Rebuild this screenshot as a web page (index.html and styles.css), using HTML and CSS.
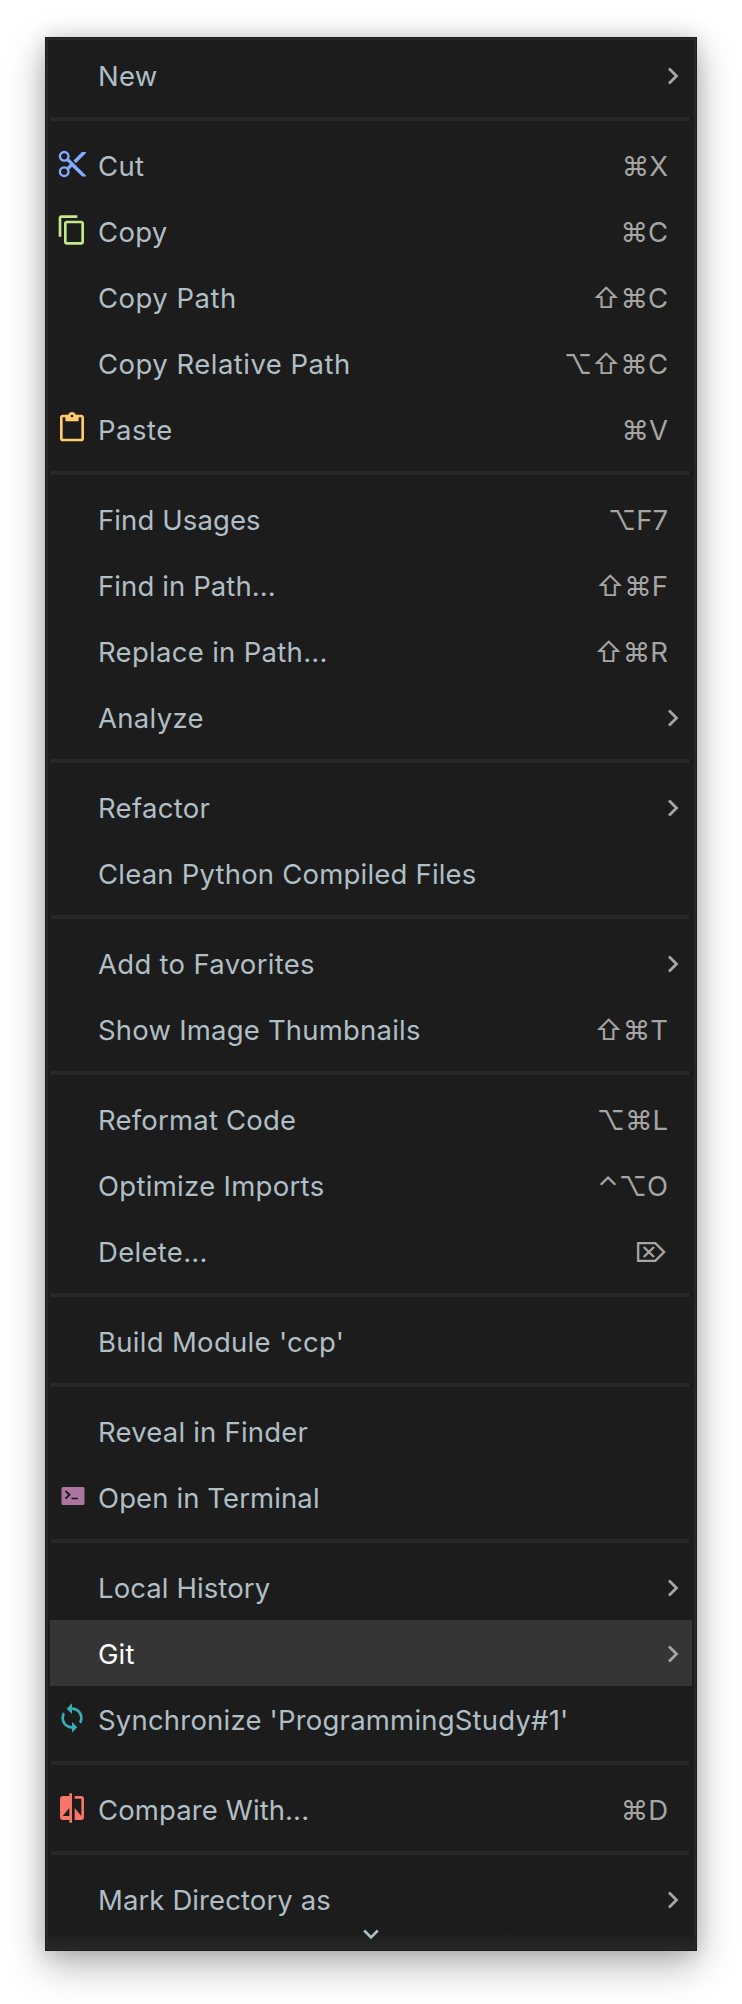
FILE: index.html
```html
<!DOCTYPE html>
<html lang="en">
<head>
<meta charset="utf-8">
<title>Context menu</title>
<link rel="stylesheet" href="styles.css">
</head>
<body>
<svg width="0" height="0" class="defs" aria-hidden="true">
  <symbol id="chevron" viewBox="0 0 12 18"><path d="M2 1.500 9.500 9 2 16.500" fill="none" stroke="currentColor" stroke-width="2.800"/></symbol>
</svg>
<nav class="menu">
  <div class="item"><span class="icon"></span><span class="label">New</span><svg class="arrow"><use href="#chevron"/></svg></div>
  <hr class="separator">
  <div class="item"><span class="icon"><svg class="cut" viewBox="0 0 28 28"><g fill="none" stroke="currentColor" stroke-width="2.400"><circle cx="6.200" cy="6.300" r="4.300"/><circle cx="6.200" cy="21.700" r="4.300"/></g><path d="M8 10.500 10.200 7.800 28 25.500V26.500H24.200L14 16.700 10 20.500 7.800 18.300 12 14ZM15.500 10.500 24 2H28V3L17.800 13.200Z" fill="currentColor"/></svg></span><span class="label">Cut</span><span class="keys">⌘X</span></div>
  <div class="item"><span class="icon"><svg class="copy" viewBox="0 0 24 24"><path d="M16 1H4c-1.100 0-2 .9-2 2v14h2V3h12V1zm3 4H8c-1.100 0-2 .9-2 2v14c0 1.100.9 2 2 2h11c1.100 0 2-.9 2-2V7c0-1.100-.9-2-2-2zm0 16H8V7h11v14z" fill="currentColor"/></svg></span><span class="label">Copy</span><span class="keys">⌘C</span></div>
  <div class="item"><span class="icon"></span><span class="label wide">Copy Path</span><span class="keys">⇧⌘C</span></div>
  <div class="item"><span class="icon"></span><span class="label wide">Copy Relative Path</span><span class="keys">⌥⇧⌘C</span></div>
  <div class="item"><span class="icon"><svg class="paste" viewBox="0 0 24 24"><path d="M19 2h-4.180C14.400.840 13.300 0 12 0c-1.300 0-2.400.840-2.820 2H5c-1.100 0-2 .9-2 2v16c0 1.100.9 2 2 2h14c1.100 0 2-.9 2-2V4c0-1.100-.9-2-2-2zm-7 0c.55 0 1 .45 1 1s-.45 1-1 1-1-.45-1-1 .45-1 1-1zm7 18H5V4h2v3h10V4h2v16z" fill="currentColor"/></svg></span><span class="label wide">Paste</span><span class="keys">⌘V</span></div>
  <hr class="separator">
  <div class="item"><span class="icon"></span><span class="label tight">Find Usages</span><span class="keys">⌥F7</span></div>
  <div class="item"><span class="icon"></span><span class="label tight">Find in Path...</span><span class="keys">⇧⌘F</span></div>
  <div class="item"><span class="icon"></span><span class="label">Replace in Path...</span><span class="keys">⇧⌘R</span></div>
  <div class="item"><span class="icon"></span><span class="label">Analyze</span><svg class="arrow"><use href="#chevron"/></svg></div>
  <hr class="separator">
  <div class="item"><span class="icon"></span><span class="label">Refactor</span><svg class="arrow"><use href="#chevron"/></svg></div>
  <div class="item"><span class="icon"></span><span class="label snug">Clean Python Compiled Files</span></div>
  <hr class="separator">
  <div class="item"><span class="icon"></span><span class="label">Add to Favorites</span><svg class="arrow"><use href="#chevron"/></svg></div>
  <div class="item"><span class="icon"></span><span class="label snug">Show Image Thumbnails</span><span class="keys">⇧⌘T</span></div>
  <hr class="separator">
  <div class="item"><span class="icon"></span><span class="label snug">Reformat Code</span><span class="keys">⌥⌘L</span></div>
  <div class="item"><span class="icon"></span><span class="label">Optimize Imports</span><span class="keys">⌃⌥O</span></div>
  <div class="item"><span class="icon"></span><span class="label">Delete...</span><span class="keys">⌦</span></div>
  <hr class="separator">
  <div class="item"><span class="icon"></span><span class="label">Build Module 'ccp'</span></div>
  <hr class="separator">
  <div class="item"><span class="icon"></span><span class="label snug">Reveal in Finder</span></div>
  <div class="item"><span class="icon"><svg class="terminal" viewBox="0 0 24 18"><rect x=".5" width="23" height="18" rx="1.500" fill="currentColor"/><path d="M4.500 4 8.500 7.800 4.500 11.600" fill="none" stroke="#1c1c1c" stroke-width="2"/><path d="M10.500 11.500h6.500" stroke="#1c1c1c" stroke-width="1.600"/></svg></span><span class="label tight">Open in Terminal</span></div>
  <hr class="separator">
  <div class="item"><span class="icon"></span><span class="label tight">Local History</span><svg class="arrow"><use href="#chevron"/></svg></div>
  <div class="item selected"><span class="icon"></span><span class="label tight">Git</span><svg class="arrow"><use href="#chevron"/></svg></div>
  <div class="item"><span class="icon"><svg class="sync" viewBox="0 0 24 24"><path d="M12 4V1L8 5l4 4V6c3.310 0 6 2.690 6 6 0 1.010-.25 1.970-.7 2.800l1.460 1.460C19.540 15.030 20 13.570 20 12c0-4.420-3.580-8-8-8zm0 14c-3.310 0-6-2.690-6-6 0-1.010.25-1.970.7-2.800L5.240 7.740C4.460 8.970 4 10.430 4 12c0 4.420 3.580 8 8 8v3l4-4-4-4v3z" fill="currentColor"/></svg></span><span class="label snug">Synchronize 'ProgrammingStudy#1'</span></div>
  <hr class="separator">
  <div class="item"><span class="icon"><svg class="compare" viewBox="0 0 24 24"><path d="M10 3H5c-1.100 0-2 .9-2 2v14c0 1.100.9 2 2 2h5v2h2V1h-2v2zm0 15H5l5-6v6zm9-15h-5v2h5v13l-5-6v9h5c1.100 0 2-.9 2-2V5c0-1.100-.9-2-2-2z" fill="currentColor"/></svg></span><span class="label tight">Compare With...</span><span class="keys">⌘D</span></div>
  <hr class="separator">
  <div class="item"><span class="icon"></span><span class="label tight">Mark Directory as</span><svg class="arrow"><use href="#chevron"/></svg></div>
  <div class="more"><svg viewBox="0 0 16 11"><path d="M1.200 1.500 8 8.500 14.800 1.500" fill="none" stroke="currentColor" stroke-width="2.600"/></svg></div>
</nav>
</body>
</html>
```
FILE: styles.css
```css
* { box-sizing: border-box; }
body { margin: 0; padding: 37px 45px 53px; background: #fff; font-family: Inter, "Liberation Sans", sans-serif; }
.defs { display: block; }
.menu {
  height: 1914px;
  padding: 2px 2px 0;
  display: flex;
  flex-direction: column;
  background: #1c1c1c;
  border: 3px solid #282828;
  border-bottom-width: 1px;
  outline: 1px solid #1c1c1c;
  outline-offset: -1px;
  box-shadow: 0 14px 36px rgba(0, 0, 0, .3), 0 0 20px rgba(0, 0, 0, .14);
}
.item { flex: none; height: 66px; display: flex; align-items: center; padding: 0 13px 0 8px; color: #b0bec5; font-size: 27.5px; line-height: 66px; white-space: nowrap; }
.selected { background: #353535; color: #fff; }
.icon { width: 40px; height: 66px; display: flex; align-items: center; }
.icon svg { flex: none; width: 32px; height: 32px; margin-left: -2px; margin-top: -2px; }
.label { flex: 1; letter-spacing: .3px; padding-top: 2px; }
.snug { letter-spacing: .2px; }
.tight { letter-spacing: .1px; }
.wide { letter-spacing: .48px; }
.keys { color: #a5a5a5; margin-right: 11px; padding-top: 2px; }
.arrow { width: 12px; height: 18px; margin-top: 1px; color: #a5a5a5; }
.separator { flex: none; height: 4px; margin: 9px 3px 11px 1px; border: 0; background: #282828; }
.cut { color: #82aaff; }
.icon .cut { width: 28px; height: 28px; margin-left: 0; }
.copy { color: #c3e88d; }
.paste { color: #ffcb6b; }
.icon .terminal { width: 24px; height: 18px; margin-left: 3px; color: #ab759f; }
.sync { color: #39adb5; }
.compare { color: #f77669; }
.more { height: 18px; margin: 0 -2px; display: flex; justify-content: center; align-items: flex-start; color: #b0bec5; background: linear-gradient(#1c1c1c, #282828); }
.more svg { width: 16px; height: 11px; margin-top: -3px; }
```
